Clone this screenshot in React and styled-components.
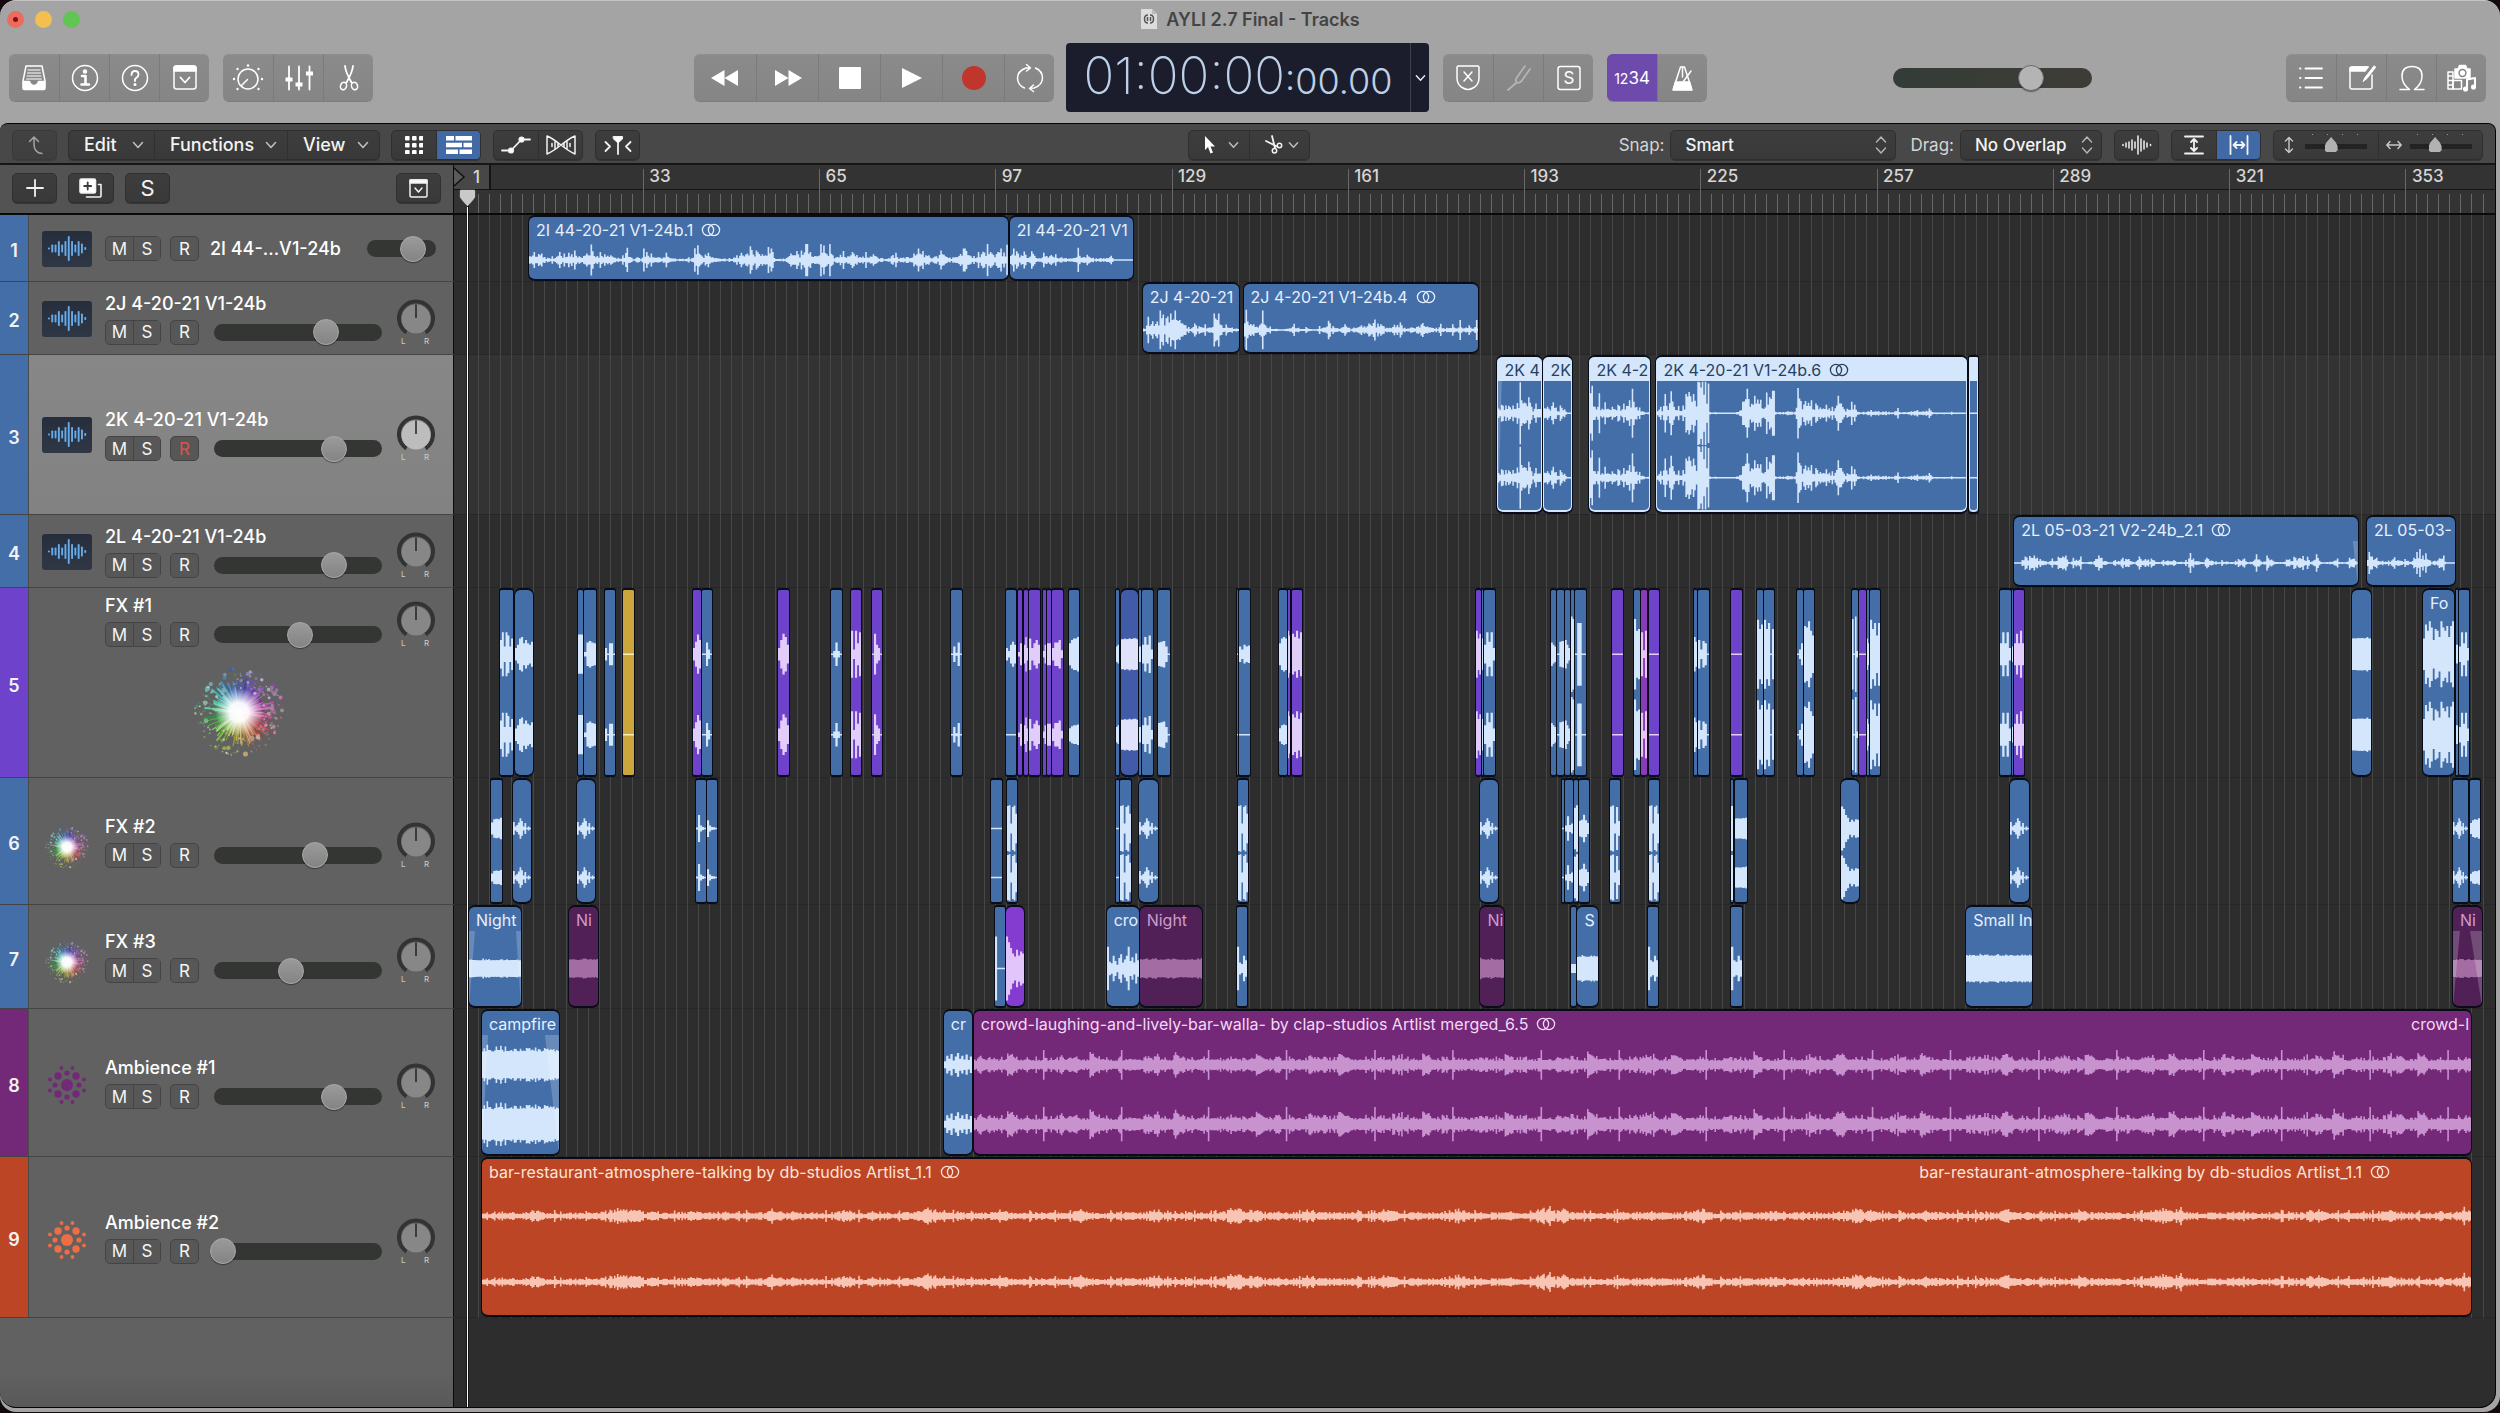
import React from 'react';
import styled, { createGlobalStyle, css } from 'styled-components';

/* ---------- palette ---------- */

const tones = {
  blue: { body: '#446ea8', wave: '#d4e6fc', text: '#e6f0ff' },
  purple: { body: '#6e42cb', wave: '#e0cdfa', text: '#efe4ff' },
  violet: { body: '#843bd0', wave: '#e2c6fb', text: '#efe4ff' },
  orchid: { body: '#8a3cb8', wave: '#e8c6f4', text: '#efe4ff' },
  indigo: { body: '#425ba9', wave: '#dfe2fa', text: '#e6f0ff' },
  gold: { body: '#cba63c', wave: '#fbeebd', text: '#fff' },
  plum: { body: '#512056', wave: '#a36da3', text: '#cf9bcf' },
  magenta: { body: '#732878', wave: '#c792ce', text: '#f3d9f6' },
  orange: { body: '#bb4525', wave: '#f8c5b4', text: '#ffe3d8' },
};

const GlobalStyle = createGlobalStyle`
  *, *::before, *::after { box-sizing: border-box; }
  body {
    margin: 0;
    background: #14090f;
    font-family: Inter, "Liberation Sans", sans-serif;
    color: #f2f2f2;
  }
  button, select, input { font: inherit; color: inherit; margin: 0; }
  button { padding: 0; border: 0; background: none; }
`;

/* ---------- window frame ---------- */

const Window = styled.div`
  display: flex;
  flex-direction: column;
  min-height: calc(100vh - 1px);
  background: #a4a4a4;
  border-top: 1px solid #c4c4c4;
  border-radius: 16px;
  overflow: hidden;
`;

const TitleBar = styled.header`
  display: grid;
  grid-template-columns: 1fr auto 1fr;
  align-items: center;
  height: 36px;
  padding: 0 7px;
`;

const Lights = styled.div`
  display: flex;
  gap: 11px;
`;

const Light = styled.button`
  display: grid;
  place-items: center;
  width: 17px;
  height: 17px;
  border-radius: 50%;
  background: ${(p) => p.$color};
  &::after {
    content: '';
    width: 5px;
    height: 5px;
    border-radius: 50%;
    background: ${(p) => (p.$edited ? '#7c1310' : 'transparent')};
  }
`;

const Title = styled.h1`
  display: flex;
  align-items: center;
  gap: 8px;
  margin: 0;
  font-size: 18px;
  font-weight: 600;
  color: #444;
`;

const ControlBar = styled.div`
  display: flex;
  align-items: center;
  height: 86px;
  padding: 0 14px 5px 9px;
`;

const Spacer = styled.div`
  flex: ${(p) => p.$grow} 1 0;
`;

const Gap = styled.div`
  flex: none;
  width: ${(p) => p.$w}px;
`;

const KeyGroup = styled.div`
  display: flex;
  flex: none;
  height: 47px;
  border-radius: 6px;
  overflow: hidden;
  background: linear-gradient(#8b8b8b, #858585);
  box-shadow: inset 0 1px #8f8f8f, 0 1px #7d7d7d;
`;

const Key = styled.button`
  display: grid;
  place-items: center;
  width: ${(p) => p.$w || 50}px;
  font-size: 17px;
  color: #fff;
  background: ${(p) => (p.$on ? '#6f4aad' : 'transparent')};
  & + & { border-left: 1px solid #7b7b7b; }
  & small { font-size: 14px; }
`;

const Lcd = styled.div`
  display: flex;
  flex: none;
  width: 363px;
  height: 69px;
  border-radius: 4px;
  background: #1b1d2c;
  color: #bcd0e8;
`;

const Time = styled.div`
  display: flex;
  flex: 1;
  align-items: baseline;
  justify-content: center;
  font-size: 51px;
  line-height: 66px;
  font-weight: 200;
`;

const TimeSmall = styled.span`
  font-size: 36px;
  font-weight: 300;
`;

const LcdMenu = styled.button`
  display: grid;
  place-items: center;
  width: 19px;
  border-left: 1px solid #3c4055;
`;

/* ---------- faders ---------- */

const FaderTrack = styled.div`
  display: flex;
  flex: none;
  align-items: center;
  width: ${(p) => p.$w}px;
  height: ${(p) => (p.$master ? 20 : 17)}px;
  border-radius: 10px;
  background: ${(p) => (p.$master ? 'linear-gradient(90deg, #343c38, #3f3c37)' : '#343633')};
`;

const Fader = styled.input`
  flex: 1;
  min-width: 0;
  height: 26px;
  margin: 0 -4px;
  appearance: none;
  background: none;
  &::-webkit-slider-thumb {
    appearance: none;
    width: 26px;
    height: 26px;
    border-radius: 50%;
    border: 1px solid ${(p) => (p.$master ? '#6c6c6c' : '#aaa')};
    background: ${(p) => (p.$master ? '#b4b4b4' : 'linear-gradient(#9a9a9a, #848484)')};
    box-shadow: 0 1px 1px rgba(0, 0, 0, 0.4);
  }
`;

/* ---------- main editor ---------- */

const Editor = styled.main`
  display: flex;
  flex: 1;
  flex-direction: column;
  margin: 0 4px 4px 0;
  border: 1px solid #050505;
  border-left: 0;
  border-radius: 8px 8px 16px 16px;
  overflow: hidden;
  background: #2d2d2d;
`;

const Toolbar = styled.div`
  display: flex;
  align-items: center;
  height: 41px;
  padding: 2px 12px 0;
  background: #484848;
  border-bottom: 2px solid #161616;
`;

const chrome = css`
  border: 1px solid #2f2f2f;
  border-radius: 5px;
  background: linear-gradient(#3d3d3d, #393939);
  box-shadow: 0 1px #353535;
`;

const ToolGroup = styled.div`
  display: flex;
  flex: none;
  height: 30px;
  overflow: hidden;
  opacity: ${(p) => (p.$dim ? 0.55 : 1)};
  ${chrome}
`;

const Tool = styled.button`
  display: flex;
  align-items: center;
  justify-content: ${(p) => (p.$menu ? 'space-between' : 'center')};
  width: ${(p) => p.$w || 44}px;
  padding: ${(p) => (p.$menu ? '0 10px 0 15px' : '0')};
  font-size: ${(p) => (p.$letter ? 22 : 18)}px;
  font-weight: ${(p) => (p.$letter ? 400 : 500)};
  background: ${(p) => (p.$on ? '#4169a5' : 'transparent')};
  & + & { border-left: 1px solid #303030; }
`;

const FieldLabel = styled.label`
  flex: none;
  margin-right: 6px;
  font-size: 17px;
  color: #d4d4d4;
`;

const Field = styled.div`
  display: grid;
  flex: none;
  width: ${(p) => p.$w}px;
  height: 30px;
  align-items: center;
  ${chrome}
  & > * { grid-area: 1 / 1; }
  & > svg { justify-self: end; margin-right: 8px; pointer-events: none; }
`;

const Select = styled.select`
  width: 100%;
  height: 28px;
  padding: 0 14px;
  border: 0;
  appearance: none;
  background: none;
  font-size: 17px;
  font-weight: 500;
`;

const ZoomCell = styled.label`
  display: flex;
  align-items: center;
  gap: 8px;
  width: 104px;
  padding-left: 7px;
  & + & { border-left: 1px solid #303030; }
`;

const ZoomRange = styled.input`
  width: 62px;
  height: 28px;
  appearance: none;
  background:
    radial-gradient(circle, #999 1px, transparent 1px) 0 2px / 15px 3px repeat-x,
    linear-gradient(#232323, #232323) 0 13px / 100% 5px no-repeat;
  &::-webkit-slider-thumb {
    appearance: none;
    width: 13px;
    height: 15px;
    background: #b2b2b2;
    clip-path: polygon(50% 0, 85% 35%, 100% 60%, 100% 90%, 85% 100%, 15% 100%, 0 90%, 0 60%, 15% 35%);
  }
`;

const HEAD = 454;

const TopRow = styled.div`
  display: flex;
  height: 50px;
  border-bottom: 2px solid #0a0a0a;
`;

const ListTools = styled.div`
  display: flex;
  flex: none;
  align-items: center;
  gap: 11px;
  width: ${HEAD}px;
  padding: 0 12px 2px;
  background: #535353;
  border-right: 1px solid #0a0a0a;
`;

const Ruler = styled.div`
  position: relative;
  flex: 1;
  background: linear-gradient(#333 24px, #141414 24px, #141414 25px, #333 25px);
`;

const RulerTicks = styled.svg`
  display: block;
  width: 100%;
  height: 100%;
`;

const BarNumber = styled.span`
  position: absolute;
  top: 0;
  padding-left: 6px;
  font-size: 17px;
  font-weight: 500;
  line-height: 22px;
  color: #d6d6d6;
`;

const CycleStart = styled.div`
  position: absolute;
  top: 0;
  left: 0;
  display: flex;
  align-items: center;
  gap: 7px;
  width: 37px;
  height: 24px;
  background: #474747;
  border-right: 2px solid #141414;
  font-size: 17px;
  font-weight: 500;
  line-height: 22px;
  color: #d6d6d6;
`;

const PlayheadCap = styled.svg`
  position: absolute;
  left: 5px;
  bottom: 6px;
  width: 17px;
  height: 18px;
`;

const Arrange = styled.div`
  position: relative;
  display: flex;
  flex: 1;
  flex-direction: column;
`;

const Playhead = styled.div`
  position: absolute;
  z-index: 3;
  top: -8px;
  bottom: 0;
  left: ${HEAD + 13}px;
  width: 1px;
  background: #fff;
  box-shadow: 0 0 0 1px rgba(0, 0, 0, 0.5);
`;

const Tracks = styled.div`
  position: relative;
`;

const GridLines = styled.svg`
  position: absolute;
  top: 0;
  left: ${HEAD}px;
  width: calc(100% - ${HEAD}px);
  height: 100%;
`;

const Row = styled.section`
  display: flex;
  height: ${(p) => p.$h}px;
  background: ${(p) => (p.$selected ? '#333' : '#2d2d2d')};
  border-bottom: 1px solid #262626;
`;

const Head = styled.div`
  display: flex;
  flex: none;
  width: ${HEAD}px;
  background: ${(p) => (p.$selected ? 'linear-gradient(#878787, #828282)' : '#616161')};
  border-right: 1px solid #0a0a0a;
  box-shadow: 0 1px #444;
`;

const Strip = styled.div`
  display: grid;
  flex: none;
  place-items: center;
  width: 29px;
  padding-top: 5px;
  background: ${(p) => p.$color};
  border-right: 1px solid #4a4a4a;
  font-size: 18px;
  font-weight: 600;
`;

const HeadBody = styled.div`
  display: flex;
  flex: 1;
  flex-direction: column;
  justify-content: ${(p) => (p.$top ? 'flex-start' : 'center')};
  padding: ${(p) => (p.$top ? 7 : 1)}px 17px 0 13px;
`;

const HeadRow = styled.div`
  display: flex;
  align-items: center;
`;

const IconSlot = styled.div`
  display: grid;
  flex: none;
  place-items: center;
  width: 50px;
  height: 36px;
  margin-right: 13px;
`;

const WaveTile = styled.svg`
  width: 50px;
  height: 36px;
  border-radius: 3px;
  background: linear-gradient(#262e3d, #303744);
`;

const NameBlock = styled.div`
  display: grid;
  gap: 5px;
`;

const TrackName = styled.span`
  font-size: 18px;
  font-weight: 500;
  line-height: 22px;
  white-space: nowrap;
  color: #fff;
`;

const Buttons = styled.div`
  display: flex;
  align-items: center;
`;

const Pair = styled.div`
  display: flex;
  height: 25px;
  margin-right: 9px;
  border: 1px solid #444;
  border-radius: 5px;
  background: #575757;
`;

const Toggle = styled.button`
  width: ${(p) => (p.$solo ? 29 : 27)}px;
  height: ${(p) => (p.$solo ? 25 : 23)}px;
  font-size: 17px;
  line-height: 20px;
  color: ${(p) => (p.$armed ? '#e0504b' : '#f5f5f5')};
  border: ${(p) => (p.$solo ? '1px solid #444' : '0')};
  border-radius: ${(p) => (p.$solo ? 5 : 0)}px;
  background: #575757;
  &:first-child { border-radius: 5px; }
  & + & { border-left: 1px solid #444; }
`;

const ButtonSet = styled.div`
  display: flex;
  margin-right: ${(p) => p.$gap}px;
`;

const PanKnob = styled.button`
  width: 38px;
  height: 52px;
  margin-left: 15px;
  & > svg { display: block; }
`;

const BigIcon = styled.div`
  display: grid;
  justify-items: center;
  margin-top: 17px;
`;

const Lane = styled.div`
  position: relative;
  flex: 1;
  min-width: 0;
`;

const Clip = styled.article`
  position: absolute;
  z-index: ${(p) => (p.$selected ? 2 : 1)};
  top: 1px;
  bottom: 1px;
  display: flex;
  flex-direction: column;
  overflow: hidden;
  border: solid #080c16;
  border-width: 1px 0;
  box-shadow: 0 0 0 1px #080c16;
  border-radius: ${(p) => (p.$round ? 6 : 2)}px;
  background: ${(p) => p.$tone.body};
  color: ${(p) => (p.$selected ? '#27405f' : p.$tone.text)};
  ${(p) => p.$selected && css`
    & > svg { border: solid #d4e6fc; border-width: 0 1px 2px; border-radius: 0 0 6px 6px; }
    & > header { background: #d4e6fc; }
  `}
`;

const ClipTitle = styled.header`
  display: flex;
  flex: none;
  align-items: center;
  gap: 8px;
  height: 24px;
  padding: 2px 0 0 7px;
  font-size: 16px;
  font-weight: 400;
  line-height: 22px;
  white-space: nowrap;
  overflow: hidden;
  & > svg { flex: none; }
`;

const RepeatTitle = styled(ClipTitle)`
  position: absolute;
  top: 0;
`;

const WaveArea = styled.svg`
  display: block;
  flex: 1;
  width: 100%;
  min-height: 0;
`;

const Rest = styled.div`
  display: flex;
  flex: 1;
  min-height: 88px;
`;

const RestHead = styled.div`
  flex: none;
  width: ${HEAD}px;
  background: linear-gradient(#616161 60%, #595959);
  border-right: 1px solid #0a0a0a;
`;

/* ---------- time scale ---------- */

const VIEW = 2042;
const ORIGIN = 13;
const STEP = 176.35 / 16;
const pct = (u) => `${(u / VIEW) * 100}%`;

/* ---------- waveforms ---------- */

function random(seed) {
  let s = seed * 7919 + 13;
  return () => {
    s = (s * 1103515245 + 12345) % 2147483648;
    return s / 2147483648;
  };
}

// "x:amp x:amp ..." becomes one amplitude (0-1) per column
function fromEnvelope(text, columns, rnd) {
  const points = text.split(' ').map((p) => p.split(':').map(Number));
  const span = points[points.length - 1][0];
  const stride = span / columns;
  return Array.from({ length: columns }, (_, i) => {
    const x = i * stride;
    const k = points.findIndex((p, n) => n === points.length - 1 || points[n + 1][0] > x);
    const a = points[k];
    const b = points[Math.min(k + 1, points.length - 1)];
    if (b[0] - x < stride) return b[1] / 100;
    const t = b[0] === a[0] ? 0 : (x - a[0]) / (b[0] - a[0]);
    return ((a[1] + (b[1] - a[1]) * t) / 100) * (0.25 + 0.6 * rnd());
  });
}

function crowd(columns, rnd) {
  return Array.from({ length: columns }, (_, i) => {
    const x = i * 1.5;
    const p = (x + 20) % 166;
    const q = p % 83;
    if (p < 1.5 || (p >= 88 && p < 89.5)) return 0.5;
    let a = 0.13 + 0.07 * rnd();
    if (rnd() > 0.8) a += 0.08;
    if (q > 22 && q < 40) a += 0.12 * rnd();
    if (q > 52 && q < 62) a += 0.2 - (q - 52) * 0.015;
    return a;
  });
}

function murmur(columns, rnd) {
  const swells = [[58, 10, 0.08], [142, 20, 0.14], [160, 8, 0.1], [215, 12, 0.06], [295, 12, 0.1]];
  return Array.from({ length: columns }, (_, i) => {
    const p = (i * 1.5 + 5) % 309;
    let a = 0.05 + 0.07 * rnd();
    swells.forEach(([c, w, h]) => {
      const d = Math.abs(p - c) / w;
      if (d < 1) a += h * (1 - d) * (0.2 + rnd());
    });
    if (rnd() > 0.92) a += 0.07;
    return a;
  });
}

function columnsFor(clip, width, seed) {
  const rnd = random(seed);
  if (clip.bars) return clip.bars.split(' ').map((v) => Number(v) / 100);
  if (clip.env) return fromEnvelope(clip.env, Math.round(width / 1.5), rnd);
  if (clip.kind === 'crowd') return crowd(Math.round(width / 1.5), rnd);
  if (clip.kind === 'murmur') return murmur(Math.round(width / 1.5), rnd);
  if (clip.block) {
    const rough = clip.rough || 0.06;
    return Array.from({ length: Math.round(width / 1.5) }, () => clip.block / 100 + rnd() * rnd() * rough);
  }
  return [];
}

function Wave({ clip, width, height, channels, color, seed, gain }) {
  const cols = columnsFor(clip, width, seed);
  const half = height / channels / 2;
  const cw = width / cols.length;
  let d = '';
  for (let c = 0; c < channels; c += 1) {
    const mid = half * (1 + 2 * c);
    const scale = (c === 1 && clip.second ? clip.second : 1) * gain;
    d += `M0 ${(mid - 0.7).toFixed(1)}H${width}v1.4H0z`;
    cols.forEach((a, i) => {
      const h = Math.min(a * scale, 0.98) * half;
      if (h > 0.7) {
        d += `M${(i * cw).toFixed(2)} ${(mid - h).toFixed(1)}h${(cw + 0.1).toFixed(2)}v${(2 * h).toFixed(1)}h${(-cw - 0.1).toFixed(2)}z`;
      }
    });
  }
  return (
    <WaveArea viewBox={`0 0 ${width} ${height}`} preserveAspectRatio="none" aria-hidden="true">
      <path d={d} fill={color} />
      {clip.fadeIn && <path d={`M0 0H${clip.fadeIn}L0 ${height}z`} fill="#fff" opacity=".2" />}
      {clip.fadeOut && <path d={`M${width} 0H${width - clip.fadeOut}L${width} ${height}z`} fill="#fff" opacity=".2" />}
    </WaveArea>
  );
}

/* ---------- session data ---------- */

const sparkle = '26 8 14 24 42 30 8 22 3 8 3';
const tall = '92 95 20 88 94 60';

const tracks = [
  {
    name: '2I 44-...V1-24b', color: '#446ea8', icon: 'audio', h: 67, level: 73, compact: true, channels: 1,
    clips: [
      { s: 75, e: 554, name: '2I 44-20-21 V1-24b.1', loop: true, env: '0:85 3:20 12:42 28:34 43:12 53:20 68:42 78:34 88:38 101:50 113:20 128:34 135:24 138:82 142:46 158:42 168:30 183:25 193:12 208:25 219:64 225:15 243:14 252:12 255:60 263:42 273:34 288:14 306:38 312:12 328:8 358:14 365:12 368:85 372:30 375:78 380:34 400:38 410:14 448:10 463:25 473:38 488:34 492:24 495:72 508:50 520:30 528:25 534:68 542:60 546:10 568:8 583:34 598:48 608:50 615:40 618:85 622:85 628:42 643:20 648:24 651:85 658:76 664:30 671:85 677:25 700:48 710:20 723:42 738:16 753:42 768:30 788:10 818:38 828:12 858:34 868:60 878:48 893:25 908:20 920:50 928:20 953:16 968:60 974:60 983:25 1003:42 1008:30 1011:85 1016:40 1023:85 1030:42 1053:60 1060:40 1068:80' },
      { s: 556, e: 679, name: '2I 44-20-21 V1', env: '0:50 8:60 14:46 24:25 33:45 40:12 48:46 58:10 75:38 90:26 100:30 115:14 125:10 148:14 151:64 154:22 170:28 185:12 200:10 219:14 222:42 226:10 240:1 272:1' },
    ],
  },
  {
    name: '2J 4-20-21 V1-24b', color: '#446ea8', icon: 'audio', h: 73, level: 69, channels: 1,
    clips: [
      { s: 689, e: 785, name: '2J 4-20-21', env: '0:20 6:20 10:60 18:40 25:38 30:88 36:70 45:62 50:75 57:88 66:45 76:22 82:14 93:30 104:14 112:26 120:12 127:75 133:45 137:75 142:22 150:25 160:12 172:6' },
      { s: 790, e: 1025, name: '2J 4-20-21 V1-24b.4', loop: true, env: '0:60 4:92 8:38 18:26 28:22 31:30 33:88 36:26 48:16 60:4 82:8 90:28 97:10 112:14 120:5 135:18 148:16 153:42 160:18 175:12 182:26 190:10 210:22 225:30 236:48 246:26 258:10 270:24 280:34 288:10 300:12 320:32 330:16 345:10 354:28 364:10 375:26 386:12 388:46 391:12 405:22 415:14 417:45 422:8' },
    ],
  },
  {
    name: '2K 4-20-21 V1-24b', color: '#446ea8', icon: 'audio', h: 160, level: 74, channels: 2, selected: true,
    clips: [
      { s: 1044, e: 1089, name: '2K 4', env: '0:35 10:30 20:36 34:32 38:96 42:40 50:76 54:50 60:20 66:30 75:20', fadeIn: 4 },
      { s: 1090, e: 1119, name: '2K', env: '0:26 6:20 14:22 18:34 22:18 30:24 38:12 44:2 50:2' },
      { s: 1136, e: 1197, name: '2K 4-2', env: '0:80 4:85 8:20 14:20 16:62 18:18 28:34 40:20 50:26 60:30 72:40 76:76 80:36 88:18 98:5 106:3' },
      { s: 1203, e: 1514, name: '2K 4-20-21 V1-24b.6', loop: true, env: '0:18 8:20 13:22 16:60 19:22 27:68 32:20 40:22 48:24 52:60 60:66 68:60 75:98 78:96 80:80 84:98 88:98 94:92 96:4 140:2 152:8 157:36 164:76 169:44 180:54 190:42 200:64 205:50 212:70 215:70 218:5 240:6 252:5 257:78 262:46 272:38 282:40 292:30 310:26 322:20 328:24 332:54 337:30 348:14 356:36 362:26 370:4 392:10 405:7 420:6 436:6 440:16 444:4 475:10 488:6 497:15 503:4 540:5 565:1' },
      { s: 1516, e: 1525, bars: '1' },
    ],
  },
  {
    name: '2L 4-20-21 V1-24b', color: '#446ea8', icon: 'audio', h: 73, level: 74, channels: 1,
    clips: [
      { s: 1561, e: 1905, name: '2L 05-03-21 V2-24b_2.1', loop: true, fadeOut: 5, env: '0:1 14:1 20:14 26:30 36:32 44:34 52:24 60:18 72:8 84:20 98:28 108:30 116:34 122:4 134:24 148:30 154:4 170:6 188:34 196:24 208:4 228:14 244:24 258:18 268:4 280:30 295:18 308:20 322:4 335:14 356:14 366:4 385:14 390:20 394:46 402:20 416:4 430:24 450:8 465:14 484:4 500:18 516:20 528:6 543:40 552:8 566:34 576:16 590:4 608:16 625:28 645:32 655:28 662:4 676:40 682:10 700:4 722:20 732:4 750:24 758:20 768:1' },
      { s: 1914, e: 2002, name: '2L 05-03-', env: '0:20 6:50 12:30 22:24 34:10 48:12 60:26 70:12 86:18 94:6 104:24 112:50 118:64 124:34 132:44 138:14 150:10 162:22 170:34 176:6 196:2' },
    ],
  },
  {
    name: 'FX #1', color: '#6e42cb', icon: 'burst', big: true, h: 190, level: 51, channels: 2, gain: 1.95,
    clips: [
      { s: 46, e: 59, bars: '18 28 10 28 24 10 20' }, { s: 61, e: 79, bars: '8 12 20 22 14 18 14 12 16' },
      { s: 124, e: 129, bars: '25 25' }, { s: 130, e: 142, bars: '3 15 17 15 14' },
      { s: 151, e: 161, bars: '8 1 14 14 1' }, { s: 169, e: 180, tone: 'gold', bars: '1' },
      { s: 239, e: 247, tone: 'purple', bars: '8 16 25 18' }, { s: 248, e: 258, bars: '1 1 15 6 1' },
      { s: 324, e: 335, tone: 'purple', bars: '8 18 26 22 12' },
      { s: 377, e: 388, bars: '1 4 15 4 1' }, { s: 397, e: 407, tone: 'purple', bars: '30 6 30 14 28' },
      { s: 418, e: 428, tone: 'purple', bars: '1 26 12 8 1' }, { s: 497, e: 508, bars: '1 10 2 15 1' },
      { s: 552, e: 562, bars: '8 4 12 16 12', second: 0.06 },
      { s: 564, e: 568, tone: 'purple', bars: '3 14' }, { s: 570, e: 574, tone: 'purple', bars: '12 22 8' },
      { s: 575, e: 586, tone: 'purple', bars: '20 8 14 18 12' }, { s: 589, e: 592, tone: 'purple', bars: '4 12' },
      { s: 593, e: 597, tone: 'purple', bars: '14 14' }, { s: 598, e: 609, tone: 'purple', bars: '8 15 15 18 5' },
      { s: 615, e: 625, bars: '14 18 20 20 22', second: 0.6 },
      { s: 662, e: 665, bars: '10 12' }, { s: 667, e: 684, tone: 'indigo', block: 19, rough: 0.02 },
      { s: 685, e: 687, bars: '10' }, { s: 688, e: 699, bars: '12 22 12 24 6' },
      { s: 704, e: 716, bars: '15 16 17 10 1' }, { s: 783, e: 784, tone: 'purple', bars: '1' },
      { s: 785, e: 796, bars: '10 6 12 10 11', second: 0.06 }, { s: 825, e: 833, bars: '14 20 22 20', second: 0.6 },
      { s: 834, e: 836, tone: 'purple', bars: '30 24' }, { s: 838, e: 848, tone: 'purple', bars: '26 22 30 20 28' },
      { s: 1023, e: 1028, tone: 'purple', bars: '30 20 26' }, { s: 1029, e: 1030, bars: '20' },
      { s: 1031, e: 1042, bars: '12 28 16 28 8' }, { s: 1098, e: 1103, bars: '15 12 10' },
      { s: 1104, e: 1111, bars: '1 16 17' }, { s: 1112, e: 1117, bars: '18 12 8' }, { s: 1118, e: 1121, bars: '48 45' },
      { s: 1122, e: 1133, bars: '1 40 40 1 1' }, { s: 1159, e: 1170, tone: 'purple', bars: '1' },
      { s: 1181, e: 1187, bars: '45 30 32' }, { s: 1188, e: 1194, tone: 'orchid', bars: '28 5 30' },
      { s: 1196, e: 1206, tone: 'purple', bars: '1' }, { s: 1241, e: 1244, bars: '22 16' },
      { s: 1245, e: 1256, bars: '18 6 17 14 1' }, { s: 1278, e: 1289, tone: 'purple', bars: '1' },
      { s: 1304, e: 1310, bars: '44 32 38' }, { s: 1311, e: 1321, bars: '44 32 40 1 32' },
      { s: 1344, e: 1350, bars: '1 6 14' }, { s: 1351, e: 1361, bars: '36 34 42 30 24' },
      { s: 1399, e: 1405, bars: '45 1 48 4' }, { s: 1406, e: 1413, tone: 'purple', bars: '1' },
      { s: 1414, e: 1416, bars: '20 14' }, { s: 1417, e: 1427, bars: '44 32 40 24 40' },
      { s: 1547, e: 1558, bars: '14 28 14 28 8' }, { s: 1559, e: 1560, bars: '10' },
      { s: 1561, e: 1571, tone: 'purple', bars: '14 26 14 30 14' },
      { s: 1899, e: 1918, block: 20, rough: 0.02 }, { s: 1970, e: 2001, name: 'Fo', bars: '20 38 30 42 34 18 32 30 22 42 34 30 36 22 36 42' },
      { s: 2003, e: 2005, bars: '12' }, { s: 2006, e: 2016, bars: '10 28 14 28 8' },
    ],
  },
  {
    name: 'FX #2', color: '#446ea8', icon: 'burst', h: 127, level: 61, channels: 2,
    clips: [
      { s: 37, e: 48, bars: '24 38 40 38 44', second: 0.7 }, { s: 59, e: 77, bars: sparkle }, { s: 123, e: 141, bars: sparkle },
      { s: 242, e: 252, bars: '4 55 12 6 1' }, { s: 253, e: 263, bars: '34 12 6 5 1' },
      { s: 537, e: 548, bars: '1' }, { s: 553, e: 563, bars: tall }, { s: 662, e: 665, bars: '1' }, { s: 666, e: 677, bars: tall },
      { s: 685, e: 704, bars: sparkle }, { s: 784, e: 794, bars: tall }, { s: 1027, e: 1045, bars: sparkle },
      { s: 1109, e: 1111, bars: '1' }, { s: 1112, e: 1120, bars: '12 50 14 20' }, { s: 1121, e: 1125, bars: '85 95' },
      { s: 1126, e: 1136, bars: '32 36 56 34 22' }, { s: 1157, e: 1167, bars: '90 94 20 88 30' },
      { s: 1196, e: 1206, bars: tall }, { s: 1278, e: 1280, bars: '92' }, { s: 1282, e: 1294, block: 40 },
      { s: 1388, e: 1406, bars: '90 80 55 44 26 36 28 38 36' }, { s: 1557, e: 1576, bars: sparkle },
      { s: 2000, e: 2015, bars: sparkle }, { s: 2017, e: 2027, bars: '22 34 38 36 42', second: 0.7 },
    ],
  },
  {
    name: 'FX #3', color: '#446ea8', icon: 'burst', h: 104, level: 45, channels: 1,
    clips: [
      { s: 15, e: 67, name: 'Night', block: 22, fadeIn: 6, fadeOut: 5 }, { s: 115, e: 144, name: 'Ni', tone: 'plum', block: 23 },
      { s: 541, e: 551, bars: '85 1 1 1 1' }, { s: 552, e: 570, tone: 'violet', bars: '85 70 55 40 32 50 35 45 40' },
      { s: 653, e: 685, name: 'cro', bars: '58 18 14 34 20 10 28 38 16 24 34 58 20 30 16 40 22' },
      { s: 686, e: 748, name: 'Night', tone: 'plum', block: 23 },
      { s: 783, e: 793, bars: '58 16 12 34 22' }, { s: 1027, e: 1051, name: 'Ni', tone: 'plum', block: 23 },
      { s: 1118, e: 1123, bars: '12' }, { s: 1124, e: 1145, name: 'S', block: 31 },
      { s: 1195, e: 1205, bars: '58 22 18 34 22' }, { s: 1278, e: 1289, bars: '58 22 18 34 22' },
      { s: 1513, e: 1579, name: 'Small In', block: 34 },
      { s: 2000, e: 2029, name: 'Ni', tone: 'plum', block: 22, fadeIn: 7, fadeOut: 12 },
    ],
  },
  {
    name: 'Ambience #1', color: '#732878', icon: 'dots', dot: '#732878', h: 148, level: 74, channels: 2,
    clips: [
      { s: 28, e: 105, name: 'campfire', fadeIn: 6, fadeOut: 14, block: 44, rough: 0.25, second: 1.15 },
      { s: 490, e: 518, name: 'cr', bars: '12 30 20 36 14 28 40 20 30 18 34 16 28' },
      { s: 520, e: 2018, name: 'crowd-laughing-and-lively-bar-walla- by clap-studios Artlist merged_6.5', loop: true, tone: 'magenta', kind: 'crowd', repeatAt: 1951, repeatName: 'crowd-l', second: 1.15 },
    ],
  },
  {
    name: 'Ambience #2', color: '#bb4525', icon: 'dots', dot: '#ee6d45', h: 161, level: 0, channels: 2,
    clips: [
      { s: 28, e: 2018, name: 'bar-restaurant-atmosphere-talking by db-studios Artlist_1.1', loop: true, tone: 'orange', kind: 'murmur', repeatAt: 1459, repeatName: 'bar-restaurant-atmosphere-talking by db-studios Artlist_1.1', repeatLoop: true },
    ],
  },
];

/* ---------- small drawings ---------- */

function Icon({ w = 30, h = 30, vb, children, stroke = 'currentColor', sw = 1.5, fill = 'none' }) {
  return (
    <svg width={w} height={h} viewBox={vb || `0 0 ${w} ${h}`} fill={fill} stroke={stroke} strokeWidth={sw} strokeLinecap="round" strokeLinejoin="round" aria-hidden="true">
      {children}
    </svg>
  );
}

const Chevron = ({ w = 12, color = '#bdbdbd' }) => (
  <Icon w={w} h={8} vb="0 0 12 8" stroke={color} sw={1.6}><path d="M1.5 1.5 6 6.5l4.5-5" /></Icon>
);

const UpDown = () => (
  <Icon w={12} h={20} stroke="#b5b5b5" sw={1.4}><path d="M1.5 7 6 2l4.5 5M1.5 13 6 18l4.5-5" /></Icon>
);

const LoopMark = () => (
  <Icon w={20} h={14} sw={1.3}><circle cx="7" cy="7" r="5.6" /><circle cx="13" cy="7" r="5.6" /></Icon>
);

function WaveGlyph() {
  const bars = [2, 8, 8, 15, 8, 15, 25, 15, 8, 15, 10, 3];
  return (
    <WaveTile viewBox="0 0 50 36" aria-hidden="true">
      {bars.map((b, i) => <rect key={i} x={6 + i * 3.3} y={17.5 - b / 2} width="1.9" height={b} rx=".8" fill="#66abec" />)}
    </WaveTile>
  );
}

function Burst({ size }) {
  const rnd = random(5);
  const rays = Array.from({ length: 130 }, (_, i) => {
    const a = (i / 130) * 360 + rnd() * 4;
    const r = 22 + rnd() * 16;
    return { a, r, w: 0.6 + rnd() * 1.4, l: 36 + rnd() * 32 };
  });
  const dots = Array.from({ length: 230 }, () => {
    const a = rnd() * 360;
    const r = 25 + rnd() * 21;
    return { a, r, s: 0.5 + rnd() * rnd() * 2.6, l: 42 + rnd() * 38, o: 0.45 + rnd() * 0.5 };
  });
  const at = (a, r) => [50 + r * Math.cos((a * Math.PI) / 180), 50 + r * Math.sin((a * Math.PI) / 180)];
  return (
    <svg width={size} height={size} viewBox="0 0 100 100" aria-hidden="true">
      <defs>
        <radialGradient id={`glow${size}`}>
          <stop offset="0" stopColor="#fff" />
          <stop offset=".4" stopColor="#fff" stopOpacity=".95" />
          <stop offset="1" stopColor="#fff" stopOpacity="0" />
        </radialGradient>
      </defs>
      {rays.map((r, i) => {
        const [x, y] = at(r.a, r.r);
        return <line key={i} x1="50" y1="50" x2={x} y2={y} stroke={`hsl(${(320 + r.a) % 360} 50% ${r.l}%)`} strokeWidth={r.w} />;
      })}
      {dots.map((p, i) => {
        const [x, y] = at(p.a, p.r);
        return <circle key={i} cx={x} cy={y} r={p.s} fill={`hsl(${(320 + p.a) % 360} 40% ${p.l}%)`} opacity={p.o} />;
      })}
      <circle cx="50" cy="50" r="25" fill={`url(#glow${size})`} />
    </svg>
  );
}

function DotCluster({ color }) {
  const dots = [[0, 0, 6]];
  [[0, -12], [0, 12], [-12, 0], [12, 0]].forEach(([x, y]) => dots.push([x, y, 2.6]));
  [[-9, -9], [9, -9], [-9, 9], [9, 9]].forEach(([x, y]) => dots.push([x, y, 3.7]));
  [[-5.5, -17], [5.5, -17], [-5.5, 17], [5.5, 17], [-17, -5.5], [-17, 5.5], [17, -5.5], [17, 5.5]].forEach(([x, y]) => dots.push([x, y, 1.9]));
  return (
    <svg width="40" height="40" viewBox="-20 -20 40 40" fill={color} aria-hidden="true">
      {dots.map(([x, y, r]) => <circle key={`${x},${y}`} cx={x} cy={y} r={r} />)}
    </svg>
  );
}

function Pan({ bright }) {
  return (
    <PanKnob type="button" aria-label="Pan">
      <svg width="38" height="52" viewBox="0 0 38 52">
        <path d="M9.5 39.5A17 17 0 1 1 28.5 39.5" fill="none" stroke="#333" strokeWidth="4" />
        <circle cx="19" cy="26" r="14.5" fill={bright ? '#bdbdbd' : '#878787'} />
        <path d="M19 11.5V25" stroke="#222" strokeWidth="1.5" />
        <text x="4" y="51" fontSize="8" fill="#ccc">L</text>
        <text x="27" y="51" fontSize="8" fill="#ccc">R</text>
      </svg>
    </PanKnob>
  );
}

/* ---------- track parts ---------- */

function TrackButtons({ armed, gap, name }) {
  return (
    <ButtonSet $gap={gap}>
      <Pair>
        <Toggle type="button" aria-label={`Mute ${name}`}>M</Toggle>
        <Toggle type="button" aria-label={`Solo ${name}`}>S</Toggle>
      </Pair>
      <Toggle type="button" $solo $armed={armed} aria-label={`Record ${name}`}>R</Toggle>
    </ButtonSet>
  );
}

function TrackIcon({ track }) {
  if (track.big) return null;
  if (track.icon === 'audio') return <WaveGlyph />;
  if (track.icon === 'burst') return <Burst size={46} />;
  return <DotCluster color={track.dot} />;
}

function TrackHead({ track, number }) {
  const fader = (w) => (
    <FaderTrack $w={w}>
      <Fader type="range" min="0" max="100" defaultValue={track.level} aria-label={`Volume ${track.name}`} />
    </FaderTrack>
  );
  return (
    <Head $selected={track.selected}>
      <Strip $color={track.color}>{number}</Strip>
      <HeadBody $top={track.big}>
        <HeadRow>
          <IconSlot><TrackIcon track={track} /></IconSlot>
          {track.compact ? (
            <>
              <TrackButtons gap={11} name={track.name} />
              <TrackName>{track.name}</TrackName>
              <Spacer $grow={1} />
              {fader(69)}
            </>
          ) : (
            <>
              <NameBlock>
                <TrackName>{track.name}</TrackName>
                <Buttons>
                  <TrackButtons gap={15} armed={track.selected} name={track.name} />
                  {fader(168)}
                </Buttons>
              </NameBlock>
              <Pan bright={track.selected} />
            </>
          )}
        </HeadRow>
        {track.big && <BigIcon><Burst size={96} /></BigIcon>}
      </HeadBody>
    </Head>
  );
}

function Region({ clip, track, seed }) {
  const tone = tones[clip.tone || 'blue'];
  const width = clip.e - clip.s;
  return (
    <Clip $tone={tone} $round={width > 15} $selected={track.selected} style={{ left: pct(clip.s), width: pct(width) }}>
      <ClipTitle>
        {clip.name}
        {clip.loop && <LoopMark />}
      </ClipTitle>
      {clip.repeatName && (
        <RepeatTitle as="div" style={{ left: `${((clip.repeatAt - clip.s) / width) * 100}%` }}>
          {clip.repeatName}
          {clip.repeatLoop && <LoopMark />}
        </RepeatTitle>
      )}
      <Wave clip={clip} width={width} height={track.h - 29} channels={track.channels} color={tone.wave} seed={seed} gain={track.gain || 1} />
    </Clip>
  );
}

function Ticks() {
  return (
    <RulerTicks shapeRendering="crispEdges" aria-hidden="true">
      {Array.from({ length: 184 }, (_, i) => (
        <line key={i} x1={pct(ORIGIN + i * STEP)} x2={pct(ORIGIN + i * STEP)} y1={i % 16 === 0 && i > 0 ? 4 : 29} y2="50" stroke="#686868" />
      ))}
    </RulerTicks>
  );
}

function Grid() {
  return (
    <GridLines shapeRendering="crispEdges" aria-hidden="true">
      {Array.from({ length: 184 }, (_, i) => (
        <line key={i} x1={pct(ORIGIN + i * STEP)} x2={pct(ORIGIN + i * STEP)} y1="0" y2="100%" stroke="#474747" />
      ))}
    </GridLines>
  );
}

/* ---------- bars ---------- */

function Controls() {
  return (
    <ControlBar>
      <KeyGroup>
        <Key type="button" aria-label="Library"><Icon w={26} h={28}>
          <path d="M5 2h16l3 15v7q0 1.5-1.500 1.500h-19Q2 25.500 2 24v-7z" />
          <path d="M7 6h12M6.500 9h13M6 12h14M5.500 15h15" strokeWidth="1.2" />
          <path d="M2.500 17.500h6q1 4 4.500 4t4.500-4h6V25h-21z" fill="#fff" />
        </Icon></Key>
        <Key type="button" aria-label="Inspector"><Icon w={28} h={28}>
          <circle cx="14" cy="14" r="12.500" />
          <circle cx="14" cy="7.500" r="1.500" fill="#fff" />
          <path d="M11 12h3.500v8M10.500 20.500h7.500" strokeWidth="2.600" />
        </Icon></Key>
        <Key type="button" aria-label="Quick Help"><Icon w={28} h={28}>
          <circle cx="14" cy="14" r="12.500" />
          <path d="M10.500 11q0-4 3.500-4t3.500 3.500q0 2-2 3.200T14 17" strokeWidth="1.800" />
          <circle cx="14" cy="20.500" r=".8" fill="#fff" />
        </Icon></Key>
        <Key type="button" aria-label="Toolbar"><Icon w={26} h={28}>
          <rect x="2" y="2" width="22" height="23" rx="2.500" />
          <path d="M2 4q0-2 2-2h18q2 0 2 2v3H2z" fill="#fff" />
          <path d="M8.500 13.500 13 18.500l4.500-5" strokeWidth="1.800" />
        </Icon></Key>
      </KeyGroup>
      <Gap $w={14} />
      <KeyGroup>
        <Key type="button" aria-label="Smart Controls"><Icon w={32} h={30}>
          <circle cx="16" cy="16" r="10" /><path d="m15.500 16.500-6 6" />
          <g fill="#fff" stroke="none"><circle cx="16" cy="2.500" r="1.300" /><circle cx="5.500" cy="6" r="1.200" /><circle cx="26.500" cy="6" r="1.200" /><circle cx="2" cy="16" r="1.200" /><circle cx="30" cy="16" r="1.200" /><circle cx="5.500" cy="26" r="1.200" /><circle cx="26.500" cy="26" r="1.200" /></g>
        </Icon></Key>
        <Key type="button" aria-label="Mixer"><Icon w={30} h={28} sw={1.8}>
          <path d="M5 2.500v23M15 2.500v23M25.500 2.500v23" />
          <path d="M1.500 15.500h7M11.500 20.500h7M22 9.500h7" strokeWidth="4" strokeLinecap="butt" />
        </Icon></Key>
        <Key type="button" aria-label="Editors"><Icon w={22} h={28}>
          <path d="M7 2q.500 6 6.500 16.500M15 2q-.500 6-6.500 16.500" strokeWidth="1.800" />
          <ellipse cx="5.500" cy="22" rx="3" ry="3.800" transform="rotate(20 5.500 22)" /><ellipse cx="16.500" cy="22" rx="3" ry="3.800" transform="rotate(-20 16.500 22)" />
        </Icon></Key>
      </KeyGroup>
      <Spacer $grow={321} />
      <KeyGroup>
        <Key type="button" $w={62} aria-label="Rewind"><Icon w={30} h={20} fill="#fff" stroke="none"><path d="M1 10 14.500 2v16zM14.500 10 28 2v16z" /></Icon></Key>
        <Key type="button" $w={62} aria-label="Forward"><Icon w={30} h={20} fill="#fff" stroke="none"><path d="M29 10 15.500 2v16zM15.500 10 2 2v16z" /></Icon></Key>
        <Key type="button" $w={62} aria-label="Stop"><Icon w={22} h={22} fill="#fff" stroke="none"><rect width="22" height="22" rx="1" /></Icon></Key>
        <Key type="button" $w={62} aria-label="Play"><Icon w={22} h={22} fill="#fff" stroke="none"><path d="M1 1v20l20-10z" /></Icon></Key>
        <Key type="button" $w={62} aria-label="Record"><Icon w={24} h={24} fill="#c0362c" stroke="none"><circle cx="12" cy="12" r="12" /></Icon></Key>
        <Key type="button" aria-label="Cycle"><Icon w={32} h={30}>
          <path d="M10.500 25Q3.500 22 3.500 15T12 5l4-.300M12.500 1.500 16.500 5l-4 3M21.500 5Q28.500 8 28.500 15T20 25l-4 .300M19.500 22l-4 3.500 4 3" />
        </Icon></Key>
      </KeyGroup>
      <Gap $w={12} />
      <Lcd>
        <Time>01:00:00<TimeSmall>:00.00</TimeSmall></Time>
        <LcdMenu type="button" aria-label="Display mode"><Chevron w={11} color="#dfe8f4" /></LcdMenu>
      </Lcd>
      <Gap $w={14} />
      <KeyGroup>
        <Key type="button" aria-label="Replace"><Icon w={26} h={28}>
          <path d="M2 3.500Q2 2 3.500 2h19Q24 2 24 3.500V14q0 7-6 10-2.500 1.500-5 1.500T8 24q-6-3-6-10z" /><path d="m9 8 8 9M17 8l-8 9" />
        </Icon></Key>
        <Key type="button" aria-label="Tuner"><Icon w={28} h={28} stroke="#b4b4b4">
          <path d="M20 2 11.500 14q-1.500 3.500.500 4.500t4.500-1.500L25 5M11 19l-8 7" strokeWidth="1.800" />
        </Icon></Key>
        <Key type="button" aria-label="Solo"><Icon w={26} h={28}>
          <rect x="2" y="2.500" width="22" height="23" rx="2.500" />
          <text x="13" y="20" textAnchor="middle" fontSize="17" fill="#fff" stroke="none">S</text>
        </Icon></Key>
      </KeyGroup>
      <Gap $w={14} />
      <KeyGroup>
        <Key type="button" $on aria-label="Count In"><span><small>12</small>34</span></Key>
        <Key type="button" aria-label="Metronome"><Icon w={24} h={28}>
          <path d="M9.500 3h4l7.500 23H2z" /><path d="M4.500 18h14l2 7.500H2.500z" fill="#fff" /><path d="m12 18 8-11" /><path d="M11.500 3v10" />
        </Icon></Key>
      </KeyGroup>
      <Spacer $grow={186} />
      <FaderTrack $w={199} $master>
        <Fader $master type="range" min="0" max="100" defaultValue={71} aria-label="Master volume" />
      </FaderTrack>
      <Spacer $grow={194} />
      <KeyGroup>
        <Key type="button" aria-label="List editors"><Icon w={26} h={26} sw={1.8}><path d="M7.500 3.500H24M7.500 13H24M7.500 22.500H24M2 3.500h.500M2 13h.500M2 22.500h.500" /></Icon></Key>
        <Key type="button" aria-label="Note pads"><Icon w={28} h={28}>
          <path d="M20 3H4Q2 3 2 5v18q0 2 2 2h18q2 0 2-2V11" /><path d="M2 7V5q0-2 2-2h16l-3 4z" fill="#fff" /><path d="m26 2-9 11.500-2 4 4-3L27.500 3.500z" fill="#fff" strokeWidth="1" />
        </Icon></Key>
        <Key type="button" aria-label="Loop browser"><Icon w={28} h={28}>
          <path d="M2 25.500h9.500Q4 20 4 12 4 2.500 14 2.500T24 12q0 8-7.500 13.500H26" />
        </Icon></Key>
        <Key type="button" aria-label="Browsers"><Icon w={32} h={30}>
          <path d="M9 6h3l1.500-3.500h6L21 6h3v9H9z" fill="#fff" /><circle cx="16.500" cy="10" r="3.400" fill="#fff" stroke="#858585" />
          <path d="M2 9h5v17H2zM2 13h5M2 17.500h5M2 22h5" /><path d="M7 17.500h8.500v8.500H7z" fill="none" />
          <path d="M21 25v-8.500l8-1.500v8.500" strokeWidth="2" /><circle cx="19.500" cy="26" r="1.800" fill="#fff" /><circle cx="27.500" cy="24" r="1.800" fill="#fff" />
        </Icon></Key>
      </KeyGroup>
    </ControlBar>
  );
}

function EditorToolbar() {
  return (
    <Toolbar>
      <ToolGroup $dim><Tool type="button" $w={43} aria-label="Up"><Icon w={18} h={20}><path d="M16 18.500Q8 18 8 9V2M3.500 6.500 8 2l4.500 4.500" /></Icon></Tool></ToolGroup>
      <Gap $w={11} />
      <ToolGroup>
        <Tool type="button" $menu $w={85}>Edit<Chevron /></Tool>
        <Tool type="button" $menu $w={133}>Functions<Chevron /></Tool>
        <Tool type="button" $menu $w={92}>View<Chevron /></Tool>
      </ToolGroup>
      <Gap $w={11} />
      <ToolGroup>
        <Tool type="button" aria-label="Grid view"><Icon w={18} h={18} fill="#fff" stroke="none">
          {[0, 7, 14].map((y) => [0, 7, 14].map((x) => <rect key={`${x}${y}`} x={x} y={y} width="4.600" height="4.600" rx="1" />))}
        </Icon></Tool>
        <Tool type="button" $on aria-label="Track view"><Icon w={26} h={18} fill="#fff" stroke="none">
          <path d="M0 0h8v4.500H0zM9.500 0H26v4.500H9.500zM0 6.700h16v4.500H0zM17.500 6.700H26v4.500h-8.500zM0 13.400h12v4.500H0zM13.500 13.400H26v4.500H13.500z" />
        </Icon></Tool>
      </ToolGroup>
      <Gap $w={12} />
      <ToolGroup>
        <Tool type="button" aria-label="Automation"><Icon w={30} h={18} sw={1.8}>
          <path d="M1 14.500h9L20.500 3.500H29" /><circle cx="10" cy="14.500" r="2.200" fill="#fff" /><circle cx="20.500" cy="3.500" r="2.200" fill="#fff" />
        </Icon></Tool>
        <Tool type="button" aria-label="Flex"><Icon w={30} h={20} sw={1.5}>
          <path d="M1 1v18Q6 17 15 10T29 1v18Q24 17 15 10T1 1M6 8.500v3M9 6.500v7M12 8v4M18 8v4M21 6.500v7M24 8.500v3" />
        </Icon></Tool>
      </ToolGroup>
      <Gap $w={12} />
      <ToolGroup><Tool type="button" $w={43} aria-label="Catch playhead"><Icon w={28} h={20} sw={1.8}>
        <path d="m1.500 7 4.500 4.500L1.500 16M26.500 7 22 11.500l4.500 4.500" /><path d="M14 6v13" /><path d="M9.500 1.500h9v2.500L14 8 9.500 4z" fill="#fff" strokeWidth="1" />
      </Icon></Tool></ToolGroup>
      <Spacer $grow={546} />
      <ToolGroup>
        <Tool type="button" $menu $w={60} aria-label="Pointer tool"><Icon w={12} h={18} fill="#fff" stroke="none"><path d="M1 0v14l3-3 2.500 6.500 2.500-1L6.500 10.500H11z" /></Icon><Chevron w={11} /></Tool>
        <Tool type="button" $menu $w={60} aria-label="Scissors tool"><Icon w={18} h={19} sw={1.5}>
          <path d="M7 1l3 12M1 6l11 5.500" strokeWidth="1.800" /><circle cx="14.500" cy="10.500" r="2.200" /><circle cx="9.500" cy="15.800" r="2.200" />
        </Icon><Chevron w={11} /></Tool>
      </ToolGroup>
      <Spacer $grow={307} />
      <FieldLabel htmlFor="snap">Snap:</FieldLabel>
      <Field $w={226}><Select id="snap" defaultValue="Smart"><option>Smart</option><option>Bar</option></Select><UpDown /></Field>
      <Gap $w={14} />
      <FieldLabel htmlFor="drag">Drag:</FieldLabel>
      <Field $w={142}><Select id="drag" defaultValue="No Overlap"><option>No Overlap</option><option>Overlap</option></Select><UpDown /></Field>
      <Gap $w={12} />
      <ToolGroup><Tool type="button" $w={43} aria-label="Waveform zoom"><Icon w={30} h={20} sw={1.5}>
        <path d="M1 9.500v1M4 8v4M7 7v6M10 5v10M13 7v6M16 1v18M19 4v12M22 6v8M25 8v4M28.500 9.500v1" />
      </Icon></Tool></ToolGroup>
      <Gap $w={12} />
      <ToolGroup>
        <Tool type="button" aria-label="Vertical auto zoom"><Icon w={20} h={20} sw={1.8}><path d="M1 1.500h18M1 18.500h18M10 4v12M7 7l3-3 3 3M7 13l3 3 3-3" /></Icon></Tool>
        <Tool type="button" $on aria-label="Horizontal auto zoom"><Icon w={20} h={20} sw={1.8}><path d="M1.500 1v18M18.500 1v18M4.500 10h11M7.500 7l-3 3 3 3M12.500 7l3 3-3 3" /></Icon></Tool>
      </ToolGroup>
      <Gap $w={12} />
      <ToolGroup>
        <ZoomCell aria-label="Vertical zoom"><Icon w={16} h={18} stroke="#c8c8c8" sw={1.4}><path d="M8 1.500v15M4.500 5 8 1.500 11.500 5M4.500 13 8 16.500l3.500-3.500" /></Icon><ZoomRange type="range" defaultValue="40" /></ZoomCell>
        <ZoomCell aria-label="Horizontal zoom"><Icon w={16} h={18} stroke="#c8c8c8" sw={1.4}><path d="M1 9h14M4 5.500.800 9 4 12.500M12 5.500 15.200 9 12 12.500" /></Icon><ZoomRange type="range" defaultValue="38" /></ZoomCell>
      </ToolGroup>
    </Toolbar>
  );
}

function ListHeader() {
  return (
    <ListTools>
      <ToolGroup><Tool type="button" $w={43} aria-label="Add track"><Icon w={18} h={18} sw={1.8}><path d="M9 1v16M1 9h16" /></Icon></Tool></ToolGroup>
      <ToolGroup><Tool type="button" $w={44} aria-label="Duplicate track"><Icon w={24} h={20} sw={1.6}>
        <path d="M19.500 6.500H22V18q0 1-1 1H7.500" /><rect x="1" y="1" width="15.500" height="14" rx="1.500" fill="#fff" /><path d="M8.700 4.500v7M5.200 8h7" stroke="#3b3b3b" strokeWidth="1.800" />
      </Icon></Tool></ToolGroup>
      <ToolGroup><Tool type="button" $w={43} $letter aria-label="Global solo">S</Tool></ToolGroup>
      <Spacer $grow={1} />
      <ToolGroup><Tool type="button" $w={43} aria-label="Track header options"><Icon w={19} h={19}>
        <rect x="1" y="1" width="17" height="17" rx="1.500" /><path d="M1 1h17v3H1z" fill="#fff" /><path d="m6 9 3.500 4L13 9" />
      </Icon></Tool></ToolGroup>
    </ListTools>
  );
}

function BarRuler() {
  return (
    <Ruler>
      <Ticks />
      {Array.from({ length: 11 }, (_, i) => (
        <BarNumber key={i} style={{ left: pct(ORIGIN + (i + 1) * STEP * 16) }}>{(i + 1) * 32 + 1}</BarNumber>
      ))}
      <CycleStart>
        <svg width="12" height="20" viewBox="0 0 12 20" aria-hidden="true"><path d="M0 1 10 10 0 19" fill="#5a5a5a" stroke="#111" strokeWidth="1.500" /></svg>
        1
      </CycleStart>
      <PlayheadCap viewBox="0 0 17 18" aria-hidden="true"><path d="M.500 2Q.500.500 2 .500h13q1.500 0 1.500 1.500v5.500q0 2-8 10-8-8-8-10z" fill="#c9c9c9" stroke="#222" strokeWidth=".600" /></PlayheadCap>
    </Ruler>
  );
}

export default function App() {
  return (
    <>
      <GlobalStyle />
      <Window>
        <TitleBar>
          <Lights>
            <Light type="button" $color="#ed6a5f" $edited aria-label="Close" />
            <Light type="button" $color="#f5bf4f" aria-label="Minimize" />
            <Light type="button" $color="#61c554" aria-label="Zoom" />
          </Lights>
          <Title>
            <svg width="18" height="20" viewBox="0 0 18 20" aria-hidden="true">
              <path d="M1 0h11l5 5v15H1z" fill="#dcdcdc" />
              <path d="M12 0v5h5z" fill="#bbb" />
              <path d="M8 6q-3.500 0-3.500 4T8 14M10 6q3.500 0 3.500 4T10 14M7.500 8v4M10.500 8v4" stroke="#555" strokeWidth="1.500" fill="none" />
            </svg>
            AYLI 2.7 Final - Tracks
          </Title>
        </TitleBar>
        <Controls />
        <Editor>
          <EditorToolbar />
          <TopRow>
            <ListHeader />
            <BarRuler />
          </TopRow>
          <Arrange>
            <Playhead />
            <Tracks>
              {tracks.map((track, i) => (
                <Row key={track.name} $h={track.h} $selected={track.selected}>
                  <TrackHead track={track} number={i + 1} />
                  <Lane>
                    {track.clips.map((clip, n) => <Region key={clip.s} clip={clip} track={track} seed={i * 100 + n + 1} />)}
                  </Lane>
                </Row>
              ))}
              <Grid />
            </Tracks>
            <Rest><RestHead /></Rest>
          </Arrange>
        </Editor>
      </Window>
    </>
  );
}
